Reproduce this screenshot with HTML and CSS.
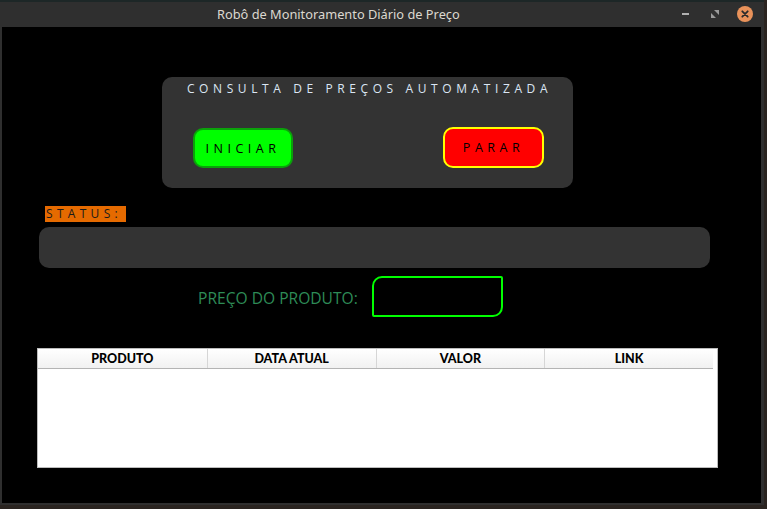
FILE: index.html
```html
<!DOCTYPE html>
<html lang="pt-BR">
<head>
<meta charset="utf-8">
<title>Robô de Monitoramento Diário de Preço</title>
<link rel="stylesheet" href="styles.css">
</head>
<body>
<div class="window">
  <div class="titlebar">
    <div class="title">Robô de Monitoramento Diário de Preço</div>
    <div class="controls">
      <span class="ctl min"></span>
      <span class="ctl max">
        <svg width="8" height="8" viewBox="0 0 8 8"><path d="M3 0h5v5z" fill="#9a9a9a"/><path d="M0 3v5h5z" fill="#9a9a9a"/></svg>
      </span>
      <span class="ctl close">
        <svg width="16" height="16" viewBox="0 0 16 16"><circle cx="8" cy="8" r="8" fill="#e9925a"/><path d="M5.3 5.3l5.4 5.4M10.7 5.3l-5.4 5.4" stroke="#2b2b2b" stroke-width="1.8" stroke-linecap="round"/></svg>
      </span>
    </div>
  </div>
  <div class="content">
    <section class="panel">
      <h1 class="panel-title">CONSULTA DE PREÇOS AUTOMATIZADA</h1>
      <div class="panel-buttons">
        <button class="btn btn-start">INICIAR</button>
        <button class="btn btn-stop">PARAR</button>
      </div>
    </section>
    <div class="status-label">STATUS:</div>
    <div class="status-bar"></div>
    <div class="price-row">
      <span class="price-label">PREÇO DO PRODUTO:</span>
      <div class="price-input"></div>
    </div>
    <div class="table">
      <div class="thead">
        <div class="th">PRODUTO</div>
        <div class="th">DATA ATUAL</div>
        <div class="th">VALOR</div>
        <div class="th">LINK</div>
      </div>
    </div>
  </div>
</div>
</body>
</html>
```
FILE: styles.css
```css
html, body {
  margin: 0;
  padding: 0;
}
body {
  width: 767px;
  height: 509px;
  background: #2a2420;
  overflow: hidden;
  font-family: "Open Sans", "Noto Sans", sans-serif;
}
.window {
  width: 764px;
  height: 505px;
  box-sizing: border-box;
  background: #2f2f2f;
  border-top: 2px solid #1d2727;
  padding: 0 3px 2px 2px;
  display: flex;
  flex-direction: column;
}
.titlebar {
  height: 25px;
  flex: none;
  display: flex;
  align-items: center;
  position: relative;
}
.title {
  flex: 1;
  color: #dcd8cf;
  font-family: "Noto Sans", sans-serif;
  font-size: 12.8px;
  padding-left: 215px;
  margin-top: -1px;
}
.controls {
  position: absolute;
  right: 8px;
  top: 4px;
  display: flex;
  align-items: center;
}
.ctl {
  display: flex;
  align-items: center;
  justify-content: center;
  height: 16px;
}
.ctl.min { width: 29px; }
.ctl.max { width: 30px; margin-right: 7px; }
.ctl.min::before {
  content: "";
  width: 7px;
  height: 2px;
  background: #b0b0b0;
}
.ctl.close { width: 16px; }
.content {
  flex: 1;
  background: #000;
  display: flex;
  flex-direction: column;
  align-items: flex-start;
}
.panel {
  margin: 50px 0 0 160px;
  width: 411px;
  height: 111px;
  box-sizing: border-box;
  background: #333333;
  border-radius: 10px;
  padding-top: 3px;
}
.panel-title {
  margin: 0;
  text-align: center;
  font-size: 12px;
  font-weight: 400;
  letter-spacing: 4.6px;
  color: #dbe6f4;
  line-height: 17px;
  padding-left: 4px;
}
.panel-buttons {
  display: flex;
  justify-content: space-between;
  padding: 30px 29px 0 31px;
  align-items: flex-start;
}
.btn {
  font-family: "Open Sans", "Noto Sans", sans-serif;
  font-size: 12.5px;
  letter-spacing: 4.5px;
  color: #000;
  border-radius: 10px;
  box-sizing: border-box;
  padding: 0;
  cursor: pointer;
}
.btn-start {
  width: 100px;
  height: 40px;
  margin-top: 1px;
  background: #00ff00;
  border: 2px solid #0aa20a;
}
.btn-stop {
  width: 101px;
  height: 41px;
  background: #ff0000;
  border: 2px solid #ffff00;
}
.status-label {
  margin: 18px 0 0 43px;
  width: 81px;
  height: 16px;
  box-sizing: border-box;
  background: #e56a00;
  color: #1a1a1a;
  font-size: 12px;
  letter-spacing: 4.3px;
  line-height: 16px;
  padding-left: 1px;
}
.status-bar {
  margin: 5px 0 0 37px;
  width: 671px;
  height: 41px;
  background: #333333;
  border-radius: 10px;
}
.price-row {
  margin: 8px 0 0 196px;
  display: flex;
  align-items: center;
  gap: 14px;
}
.price-label {
  color: #2e8b57;
  font-size: 15.6px;
  margin-top: 2px;
}
.price-input {
  width: 131px;
  height: 41px;
  box-sizing: border-box;
  border: 2px solid #00ff00;
  border-radius: 10px 2px 10px 2px;
  background: #000;
}
.table {
  margin: 31px 0 0 35px;
  width: 681px;
  height: 120px;
  box-sizing: border-box;
  background: #fff;
  border: 1px solid #bcbcbc;
  padding-right: 4px;
}
.thead {
  display: grid;
  grid-template-columns: repeat(4, 1fr);
  height: 19px;
  background: linear-gradient(#ffffff, #f1f1f1);
  border-bottom: 1px solid #b4b4b4;
}
.th {
  text-align: center;
  font-family: "Lato", sans-serif;
  font-weight: 900;
  font-size: 12.5px;
  line-height: 19px;
  color: #000;
  border-left: 1px solid #d6d6d6;
}
.th:first-child { border-left: none; }
```
